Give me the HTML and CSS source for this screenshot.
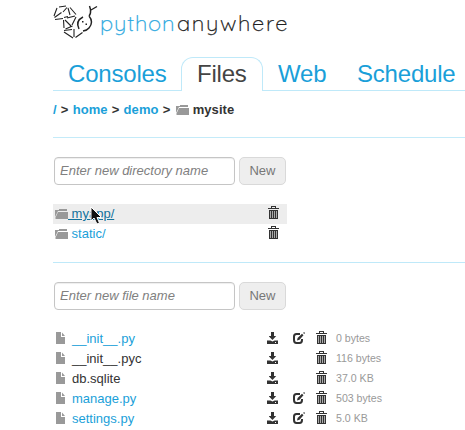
FILE: index.html
```html
<!DOCTYPE html>
<html lang="en">
<head>
<meta charset="utf-8">
<title>Files : PythonAnywhere</title>
<link rel="stylesheet" href="styles.css">
</head>
<body>
<svg width="0" height="0" class="sprites">
  <symbol id="folder" viewBox="0 0 13 12"><path d="M0 9V2h4V1h8v2H3z"/><path d="M3 4H13v7H0.500V9.500z"/></symbol>
  <symbol id="file" viewBox="0 0 9 12"><path d="M0 0h5v5h4v7H0z"/><path d="M6 0.500L9 4H6z"/></symbol>
  <symbol id="trash" viewBox="0 0 11 13"><path d="M3 0h5v2h3v1H0V2h3zM4 1v1h3V1z" fill-rule="evenodd"/><path d="M1 4h9v9H1z"/><path class="slats" d="M2.500 5v7M4.500 5v7M6.500 5v7M8.500 5v7"/></symbol>
  <symbol id="download" viewBox="0 0 12 12"><path d="M4 0h3v4h2.200L5.500 8 2 4.500V4h2z"/><path d="M0 8.500h3.500l2 1 2-1H11V12H0z"/><path class="light" d="M8 10h1v1H8z"/></symbol>
  <symbol id="edit" viewBox="0 0 12 12"><path class="pen" d="M7 2H3.500Q1 2 1 4.500V8q0 3 2.500 3h3Q9 11 9 8V7"/><path d="M4 8.500l.6-2.500L9 1.700l1.500 1.500L6.500 7.800zM10.200 1l.8-1L12 1l-.8.900z"/></symbol>
</svg>
<div class="page">
  <header class="brand">
    <svg class="snake" width="46" height="36" viewBox="0 0 46 36">
      <path d="M4 3L1 11M6 2l7-1M1.500 12.500l7-5M10 7l4-4.500M15 3l2 7M2 14.500l8-1M11 12.500l4-1M17 2.500l6 7M14 13l8-2M10.500 15l.5 8M12 15l6 6M23 12l-4 8M12.500 24l7-3M11 25.500l8-1M11 27l9 6M21 24v8M22.500 32.500l7-5"/>
      <path class="bold" d="M30 12q-8 4-4 12M36 11q5 6 0 12-2 2.500-6 3M36 11q2-2 1.500-6.500L36.500 1M38 5l6-3.500"/>
      <path class="eyes" d="M29 16h1.500v1.500H29zM32.500 18.500H34V20h-1.500z"/>
    </svg>
    <span class="wordmark"><span class="python">python</span><span class="anywhere">anywhere</span></span>
  </header>
  <nav class="tabs">
    <a class="tab">Consoles</a><a class="tab active">Files</a><a class="tab">Web</a><a class="tab last">Schedule</a>
  </nav>
  <div class="crumbs"><a>/</a> &gt; <a>home</a> &gt; <a>demo</a> &gt; <svg class="folder"><use href="#folder"/></svg> mysite</div>
  <section class="directories">
    <form class="create"><input placeholder="Enter new directory name"><button type="button">New</button></form>
    <div class="dir hovered"><a><svg class="folder"><use href="#folder"/></svg> myapp/</a><svg class="trash"><use href="#trash"/></svg>
      <svg class="cursor" width="13" height="19" viewBox="0 0 13 19"><path d="M1 1v14l3-3 3 6 2.500-1-2.500-5.500h4.500z"/></svg>
    </div>
    <div class="dir"><a><svg class="folder"><use href="#folder"/></svg> static/</a><svg class="trash"><use href="#trash"/></svg></div>
  </section>
  <section class="files">
    <form class="create"><input placeholder="Enter new file name"><button type="button">New</button></form>
    <div class="row"><svg class="file"><use href="#file"/></svg><a>__init__.py</a><svg class="download"><use href="#download"/></svg><svg class="edit"><use href="#edit"/></svg><svg class="trash"><use href="#trash"/></svg><small>0 bytes</small></div>
    <div class="row"><svg class="file"><use href="#file"/></svg><span>__init__.pyc</span><svg class="download"><use href="#download"/></svg><svg class="trash"><use href="#trash"/></svg><small>116 bytes</small></div>
    <div class="row"><svg class="file"><use href="#file"/></svg><span>db.sqlite</span><svg class="download"><use href="#download"/></svg><svg class="trash"><use href="#trash"/></svg><small>37.0 KB</small></div>
    <div class="row"><svg class="file"><use href="#file"/></svg><a>manage.py</a><svg class="download"><use href="#download"/></svg><svg class="edit"><use href="#edit"/></svg><svg class="trash"><use href="#trash"/></svg><small>503 bytes</small></div>
    <div class="row"><svg class="file"><use href="#file"/></svg><a>settings.py</a><svg class="download"><use href="#download"/></svg><svg class="edit"><use href="#edit"/></svg><svg class="trash"><use href="#trash"/></svg><small>5.0 KB</small></div>
  </section>
</div>
</body>
</html>
```
FILE: styles.css
```css
* { box-sizing: border-box; }
body { margin: 0; overflow: hidden; background: #fff; color: #333; font: 13px/20px "Liberation Sans", Arial, sans-serif; }
a { color: #1a9fd9; text-decoration: none; }
svg { fill: #333; flex: none; }
.sprites { position: absolute; }
.page { padding-left: 53px; }
.brand { display: flex; height: 57px; padding-top: 5px; }
.snake { fill: none; stroke: #222; stroke-width: 1.1; }
.snake .bold { stroke-width: 1.4; }
.snake .eyes { fill: #222; stroke: none; }
.wordmark { display: flex; font: 300 22px/36px Quicksand, Lato, sans-serif; height: 36px; -webkit-text-stroke: 0.25px; }
.python { width: 78px; padding-left: 1px; color: #2ba8e0; letter-spacing: 0.8px; }
.anywhere { color: #222; letter-spacing: 1.65px; }
.tabs { display: flex; height: 34px; font-size: 24px; line-height: 32px; letter-spacing: -0.2px; }
.tab { flex: none; border-bottom: 1px solid #bfe9f9; padding: 1px 14px 0 15px; white-space: nowrap; }
.tab:first-child { width: 128px; }
.tab.active { width: 82px; color: #444; padding: 0 0 0 15px; border: 1px solid #bfe9f9; border-bottom: 0; border-radius: 12px 12px 0 0; }
.tab:nth-child(3) { width: 79px; }
.tab.last { flex: 1; padding-left: 15px; }
.crumbs { height: 47px; padding-top: 9px; font-weight: bold; border-bottom: 1px solid #c4ebf9; white-space: pre; word-spacing: 0.5px; letter-spacing: 0.06px; }
.folder { width: 13px; height: 12px; fill: #999; vertical-align: -2px; }
.crumbs .folder { margin-left: 1px; }
.directories { height: 125px; padding-top: 19px; border-bottom: 1px solid #bfe9f9; }
.create { display: flex; gap: 4px; margin: 0 0 19px 1px; }
.create input { width: 181px; height: 28px; padding: 0 5px 2px; border: 1px solid #c5c5c5; border-radius: 4px; font: italic 13px "Liberation Sans", Arial, sans-serif; box-shadow: inset 0 1px 1px #eee; }
.create input::placeholder { color: #808080; opacity: 1; }
.create button { width: 47px; height: 28px; padding: 0 0 2px; border: 1px solid #d9d9d9; border-radius: 5px; background: #eee; color: #777; font: 13px "Liberation Sans", Arial, sans-serif; }
.dir { position: relative; display: flex; align-items: flex-start; width: 234px; height: 20px; padding: 0 8px 0 2px; justify-content: space-between; }
.dir .trash { margin-top: 2px; }
.hovered { background: #ededed; }
.hovered a { color: #13729c; text-decoration: underline; }
.cursor { position: absolute; left: 37px; top: 2px; fill: #111; stroke: #fff; stroke-width: 1; }
.trash { width: 11px; height: 13px; }
.slats { stroke: #aaa; stroke-width: 1; fill: none; }
.files { padding-top: 19px; }
.files .create { margin-bottom: 18px; }
.row { display: grid; grid-template-columns: 16px 195px 26px 23px 20px 100px; align-items: start; height: 20px; padding-left: 3px; }
.row a, .row span { line-height: 22px; }
.row svg { margin-top: 4px; }
.row .file { width: 9px; height: 12px; fill: #999; }
.download { width: 12px; height: 12px; grid-column: 3; }
.light { fill: #fff; }
.edit { width: 12px; height: 12px; grid-column: 4; }
.pen { fill: none; stroke: #333; stroke-width: 2; }
.row .trash { grid-column: 5; margin-top: 3px; }
.row small { color: #999; font-size: 10.6px; grid-column: 6; line-height: 21px; }
```
